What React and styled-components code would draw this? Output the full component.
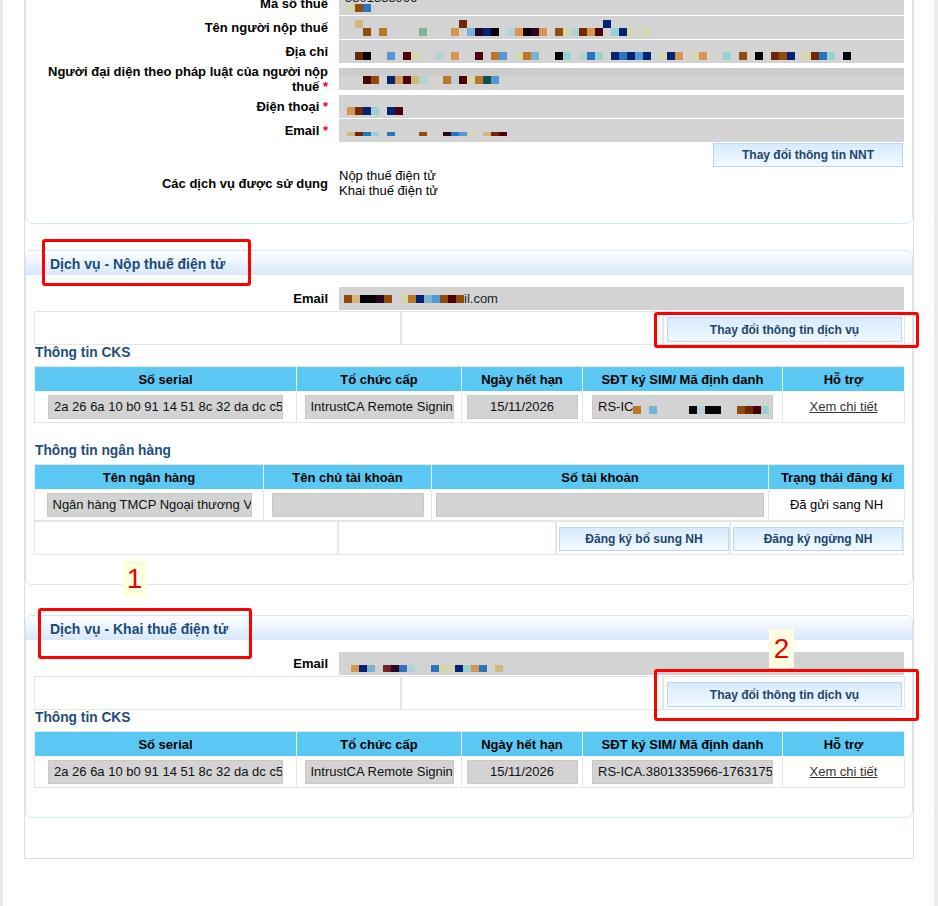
import React from 'react';
import styled, { createGlobalStyle } from 'styled-components';

const Global = createGlobalStyle`
  html, body { margin: 0; padding: 0; background: #fff; }
  body { font-family: "Liberation Sans", Arial, sans-serif; font-size: 13px; color: #000; }
  * { box-sizing: border-box; }
`;

const PAL = {
  a: '#8f4c0c', b: '#bb7628', c: '#d69650', d: '#6e2a08', e: '#4c0008', f: '#062274',
  g: '#2b74be', h: '#5596d6', i: '#78b2d4', j: '#97d2d2', k: '#b6d2d6', l: '#d6d6ac',
  m: '#d4b878', n: '#050505', o: '#2c0424', p: '#78b696', q: '#045454', r: '#702424',
};

const Page = styled.div`
  position: relative;
  display: flex;
  width: 938px;
  height: 906px;
  overflow: hidden;
`;
const EdgeLeft = styled.div`
  width: 3px;
  flex: none;
  background: #e9e9e9;
`;
const EdgeRight = styled.div`
  width: 4px;
  flex: none;
  background: #ececec;
`;
const Main = styled.div`
  flex: 1;
  padding: 0 20px 0 21px;
`;
const Container = styled.div`
  width: 890px;
  margin-top: -45px;
  border: 1px solid #dedede;
  border-top: none;
  padding-bottom: 40px;
`;
const Panel = styled.section`
  border: 1px solid #d5e6f7;
  border-radius: 7px;
  margin-top: ${p => p.$mt || 0}px;
  overflow: hidden;
`;
const PanelHead = styled.div`
  height: 24px;
  padding-left: 24px;
  padding-top: 1px;
  display: flex;
  align-items: center;
  background: linear-gradient(#ffffff, #d6e8fb);
  font-weight: bold;
  color: #1b4a79;
  font-size: 14px;
`;
const PanelBody = styled.div`
  padding: 12px 6px ${p => p.$pb}px 8px;
`;
const FormGrid = styled.div`
  display: grid;
  grid-template-columns: 294px 565px;
  column-gap: 11px;
  row-gap: 1px;
  align-items: center;
`;
const Label = styled.div`
  text-align: right;
  font-weight: bold;
  line-height: 15px;
`;
const Req = styled.span`
  color: #ee0000;
`;
const FormField = styled.div`
  height: ${p => p.$h || 23}px;
  background: #d3d3d3;
  padding-top: ${p => p.$pt || 0}px;
  padding-left: ${p => p.$pl || 0}px;
  overflow: hidden;
  white-space: nowrap;
  display: ${p => (p.$flex ? 'flex' : 'block')};
  align-items: center;
  color: #222;
`;
const FieldText = styled.div`
  line-height: 12px;
  height: 12px;
  padding-left: 6px;
  color: #222;
`;
const MosaicLine = styled.div`
  display: ${p => (p.$inline ? 'inline-flex' : 'flex')};
  vertical-align: ${p => (p.$inline ? '-3px' : 'baseline')};
  height: ${p => p.$h}px;
  background: ${p => p.$bg || 'transparent'};
  flex: none;
`;
const Px = styled.span`
  width: 8px;
  height: 100%;
  flex: none;
  background: ${p => p.$c};
`;
const Values = styled.div`
  line-height: 15px;
  padding: 0;
`;
const BtnSlot = styled.div`
  justify-self: end;
  margin-right: 1px;
`;
const Btn = styled.button`
  display: block;
  height: ${p => p.$h || 24}px;
  width: ${p => (p.$w ? `${p.$w}px` : '100%')};
  border: 1px solid #b6daf8;
  background: linear-gradient(#d7ebfc, #f1f8ff);
  font: bold 12px "Liberation Sans", Arial, sans-serif;
  color: #21456b;
  padding: 0;
  margin: 0;
  cursor: pointer;
`;
const SubTitle = styled.div`
  font-weight: bold;
  font-size: 13.75px;
  color: #1d4e7d;
  line-height: 15px;
  margin: ${p => p.$mt || 0}px 0 6px 1px;
`;
const Table = styled.table`
  width: 870px;
  table-layout: fixed;
  border-collapse: collapse;
  border: 1px solid #e6e6e6;
`;
const Th = styled.th`
  width: ${p => p.$w}px;
  height: 25px;
  background: #5ac8f2;
  border: 1px solid #e9f6fd;
  border-top-color: #e6e6e6;
  border-bottom-color: #f0f8fc;
  font-weight: bold;
  font-size: 13px;
  text-align: center;
  padding: 0;
  color: #000;
`;
const Td = styled.td`
  border: 1px solid #e6e6e6;
  padding: 3px 0;
  text-align: center;
  line-height: 24px;
`;
const CellField = styled.div`
  display: block;
  margin: 0 auto;
  width: ${p => p.$w}px;
  height: 24px;
  line-height: 22px;
  background: #d3d3d3;
  border: 1px solid #c8c8c8;
  padding: 0 5px;
  text-align: ${p => p.$align || 'left'};
  overflow: hidden;
  white-space: nowrap;
  color: #111;
`;
const LinkText = styled.a`
  color: #333;
  text-decoration: underline;
  cursor: pointer;
`;
const ActTable = styled.table`
  width: ${p => p.$w}px;
  table-layout: fixed;
  border-collapse: separate;
  border-spacing: 0;
  margin-top: ${p => p.$mt || 0}px;
`;
const ActTd = styled.td`
  width: ${p => p.$w}px;
  border: 1px solid #e6e6e6;
  padding: 5px ${p => p.$pr ?? 2}px ${p => p.$pb ?? 2}px ${p => p.$pl ?? 3}px;
  height: 34px;
  vertical-align: top;
`;
const RedBox = styled.div`
  position: absolute;
  left: ${p => p.$x}px;
  top: ${p => p.$y}px;
  width: ${p => p.$w}px;
  height: ${p => p.$h}px;
  border: 3px solid #ff0000;
  border-radius: 3px;
  pointer-events: none;
`;
const Marker = styled.div`
  position: absolute;
  left: ${p => p.$x}px;
  top: ${p => p.$y}px;
  width: 25px;
  height: 39px;
  background: #ffffe2;
  color: #f00000;
  font: 28px "Liberation Sans", Arial, sans-serif;
  display: flex;
  align-items: center;
  justify-content: center;
`;

function Mosaic({ rows, h = 8, inline, bg }) {
  return rows.map((r, ri) => (
    <MosaicLine key={ri} $h={h} $inline={inline} $bg={bg && ri === 0 ? bg : undefined}>
      {[...r].map((ch, i) => (
        <Px key={i} $c={PAL[ch] || 'transparent'} />
      ))}
    </MosaicLine>
  ));
}

function CksTable({ phone }) {
  return (
    <Table>
      <thead>
        <tr>
          <Th $w={262}>Số serial</Th>
          <Th $w={165}>Tổ chức cấp</Th>
          <Th $w={121}>Ngày hết hạn</Th>
          <Th $w={200}>SĐT ký SIM/ Mã định danh</Th>
          <Th $w={122}>Hỗ trợ</Th>
        </tr>
      </thead>
      <tbody>
        <tr>
          <Td><CellField $w={235}>2a 26 6a 10 b0 91 14 51 8c 32 da dc c5 7f 1e</CellField></Td>
          <Td><CellField $w={149}>IntrustCA Remote Signing</CellField></Td>
          <Td><CellField $w={111} $align="center">15/11/2026</CellField></Td>
          <Td><CellField $w={181}>{phone}</CellField></Td>
          <Td><LinkText>Xem chi tiết</LinkText></Td>
        </tr>
      </tbody>
    </Table>
  );
}

function ServiceAction() {
  return (
    <ActTable $w={871} $mt={1}>
      <tbody>
        <tr>
          <ActTd $w={367} />
          <ActTd $w={262} />
          <ActTd $w={242}>
            <Btn $h={25}>Thay đổi thông tin dịch vụ</Btn>
          </ActTd>
        </tr>
      </tbody>
    </ActTable>
  );
}

export default function App() {
  return (
    <>
      <Global />
      <Page>
        <EdgeLeft />
        <Main>
          <Container>
            <Panel>
              <PanelHead>Thông tin người nộp thuế</PanelHead>
              <PanelBody $pb={25}>
                <FormGrid>
                  <Label>Mã số thuế</Label>
                  <FormField>
                    <FieldText>3801335966</FieldText>
                    <Mosaic rows={['.lag']} />
                  </FormField>

                  <Label>Tên người nộp thuế</Label>
                  <FormField $pt={4}>
                    <Mosaic
                      rows={[
                        '..m............d.................f',
                        '...a.b....p...c.iofn.kcnoc.alkdce.jfl.l',
                      ]}
                    />
                  </FormField>

                  <Label>Địa chỉ</Label>
                  <FormField $pt={12}>
                    <Mosaic rows={['..dn..h.el..k.c..e.bh.lbi..nj.kgj.fgfhf.lfc.lc..j.a.n.daf.ldgj.n']} />
                  </FormField>

                  <Label>
                    Người đại diện theo pháp luật của người nộp thuế <Req>*</Req>
                  </Label>
                  <FormField $h={22}>
                    <Mosaic rows={['', '...ea.fcemk..bkelbqh']} bg="#cccccc" />
                  </FormField>

                  <Label>
                    Điện thoại <Req>*</Req>
                  </Label>
                  <FormField $pt={12}>
                    <Mosaic rows={['.cdfj.fe']} />
                  </FormField>

                  <Label>
                    Email <Req>*</Req>
                  </Label>
                  <FormField $pt={13}>
                    <Mosaic rows={['.mdgj.g...a..oghl.mde']} h={4} />
                  </FormField>

                  <div />
                  <BtnSlot>
                    <Btn $w={190}>Thay đổi thông tin NNT</Btn>
                  </BtnSlot>

                  <Label>Các dịch vụ được sử dụng</Label>
                  <Values>
                    Nộp thuế điện tử
                    <br />
                    Khai thuế điện tử
                  </Values>
                </FormGrid>
              </PanelBody>
            </Panel>

            <Panel $mt={26}>
              <PanelHead>Dịch vụ - Nộp thuế điện tử</PanelHead>
              <PanelBody $pb={29}>
                <FormGrid>
                  <Label>Email</Label>
                  <FormField $flex $pl={5}>
                    <Mosaic rows={['amnnoa.lbfihaea']} />
                    <span>il.com</span>
                  </FormField>
                </FormGrid>
                <ServiceAction />
                <SubTitle>Thông tin CKS</SubTitle>
                <CksTable
                  phone={
                    <>
                      RS-IC
                      <Mosaic rows={['b.i....nknn..adej']} inline />
                    </>
                  }
                />
                <SubTitle $mt={20}>Thông tin ngân hàng</SubTitle>
                <Table>
                  <thead>
                    <tr>
                      <Th $w={229}>Tên ngân hàng</Th>
                      <Th $w={168}>Tên chủ tài khoản</Th>
                      <Th $w={337}>Số tài khoản</Th>
                      <Th $w={136}>Trạng thái đăng kí</Th>
                    </tr>
                  </thead>
                  <tbody>
                    <tr>
                      <Td><CellField $w={205}>Ngân hàng TMCP Ngoại thương Việt Nam</CellField></Td>
                      <Td><CellField $w={152} /></Td>
                      <Td><CellField $w={328} /></Td>
                      <Td>Đã gửi sang NH</Td>
                    </tr>
                  </tbody>
                </Table>
                <ActTable $w={870}>
                  <tbody>
                    <tr>
                      <ActTd $w={304} />
                      <ActTd $w={218} />
                      <ActTd $w={174} $pl={2} $pr={0} $pb={3}>
                        <Btn>Đăng ký bổ sung NH</Btn>
                      </ActTd>
                      <ActTd $w={174} $pl={2} $pr={0} $pb={3}>
                        <Btn>Đăng ký ngừng NH</Btn>
                      </ActTd>
                    </tr>
                  </tbody>
                </ActTable>
              </PanelBody>
            </Panel>

            <Panel $mt={30}>
              <PanelHead>Dịch vụ - Khai thuế điện tử</PanelHead>
              <PanelBody $pb={29}>
                <FormGrid>
                  <Label>Email</Label>
                  <FormField $pt={13} $pl={12}>
                    <Mosaic rows={['cfi.rogk..gllfjcg.m']} h={7} />
                  </FormField>
                </FormGrid>
                <ServiceAction />
                <SubTitle>Thông tin CKS</SubTitle>
                <CksTable phone="RS-ICA.3801335966-1763175612" />
              </PanelBody>
            </Panel>
          </Container>
        </Main>
        <EdgeRight />

        <RedBox $x={42} $y={239} $w={209} $h={47} />
        <RedBox $x={654} $y={312} $w={265} $h={36} />
        <Marker $x={122} $y={559}>1</Marker>
        <RedBox $x={38} $y={608} $w={214} $h={51} />
        <Marker $x={769} $y={629}>2</Marker>
        <RedBox $x={654} $y={669} $w={265} $h={52} />
      </Page>
    </>
  );
}
